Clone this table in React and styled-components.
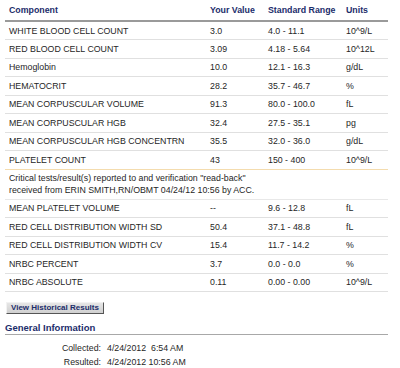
import React from 'react'
import styled, { createGlobalStyle } from 'styled-components'

const GlobalStyle = createGlobalStyle`
  body {
    margin: 0;
    background: #ffffff;
    font-family: "Liberation Sans", Arial, sans-serif;
  }
`;

const Page = styled.div`
  width: 400px;
  padding: 0 12px 0 5px;
  box-sizing: border-box;
`;

const ResultTable = styled.table`
  width: 383px;
  border-collapse: collapse;
  table-layout: fixed;
  font-size: 8.8px;
  color: #262626;
`;

const HeadCell = styled.th`
  box-sizing: border-box;
  text-align: left;
  font-weight: bold;
  color: #1c2d6b;
  height: 21px;
  padding: 0 0 0 4px;
  border-bottom: 2px solid #9a9a9a;
  width: ${(p) => p.$w || 'auto'};
`;

const Row = styled.tr`
  height: 18.5px;
  border-bottom: 1px solid ${(p) => (p.$alert ? '#f4dcae' : '#e0e0e0')};
`;

const Cell = styled.td`
  padding: 0 0 0 4px;
  white-space: nowrap;
`;

const NoteRow = styled.tr`
  border-bottom: 1px solid #e8e8e8;
`;

const NoteCell = styled.td`
  padding: 2px 0 3px 4px;
  line-height: 12px;
`;

const Actions = styled.div`
  display: flex;
  padding: 10px 0 0 1px;
`;

const HistoryButton = styled.button`
  font-family: "Liberation Sans", Arial, sans-serif;
  font-size: 8px;
  font-weight: bold;
  color: #1c2d6b;
  background: linear-gradient(#e6e6e6, #d0d0d0);
  border: 1px solid;
  border-color: #f2f2f2 #555 #555 #f2f2f2;
  padding: 0 4px;
  height: 12px;
  line-height: 10px;
`;

const SectionTitle = styled.div`
  margin-top: 8px;
  font-size: 9.5px;
  line-height: 11px;
  font-weight: bold;
  color: #1c2d6b;
  padding-bottom: 1px;
  border-bottom: 1px solid #a8a8a8;
  width: 383px;
`;

const InfoGrid = styled.div`
  display: grid;
  grid-template-columns: 96px auto;
  column-gap: 6px;
  row-gap: 3px;
  margin-top: 8px;
  font-size: 8.8px;
  line-height: 11px;
  color: #262626;
`;

const InfoLabel = styled.span`
  text-align: right;
`;

const InfoValue = styled.span`
  white-space: pre;
`;

const results = [
  ['WHITE BLOOD CELL COUNT', '3.0', '4.0 - 11.1', '10^9/L'],
  ['RED BLOOD CELL COUNT', '3.09', '4.18 - 5.64', '10^12L'],
  ['Hemoglobin', '10.0', '12.1 - 16.3', 'g/dL'],
  ['HEMATOCRIT', '28.2', '35.7 - 46.7', '%'],
  ['MEAN CORPUSCULAR VOLUME', '91.3', '80.0 - 100.0', 'fL'],
  ['MEAN CORPUSCULAR HGB', '32.4', '27.5 - 35.1', 'pg'],
  ['MEAN CORPUSCULAR HGB CONCENTRN', '35.5', '32.0 - 36.0', 'g/dL'],
  ['PLATELET COUNT', '43', '150 - 400', '10^9/L', true],
]

const moreResults = [
  ['MEAN PLATELET VOLUME', '--', '9.6 - 12.8', 'fL'],
  ['RED CELL DISTRIBUTION WIDTH SD', '50.4', '37.1 - 48.8', 'fL'],
  ['RED CELL DISTRIBUTION WIDTH CV', '15.4', '11.7 - 14.2', '%'],
  ['NRBC PERCENT', '3.7', '0.0 - 0.0', '%'],
  ['NRBC ABSOLUTE', '0.11', '0.00 - 0.00', '10^9/L'],
]

const ResultRow = ({ r }) => (
  <Row $alert={r[4]}>
    <Cell>{r[0]}</Cell>
    <Cell>{r[1]}</Cell>
    <Cell>{r[2]}</Cell>
    <Cell>{r[3]}</Cell>
  </Row>
)

const App = () => {
  return (
    <Page>
      <GlobalStyle />
      <ResultTable>
        <thead>
          <tr>
            <HeadCell $w="201px">Component</HeadCell>
            <HeadCell $w="58px">Your Value</HeadCell>
            <HeadCell $w="78px">Standard Range</HeadCell>
            <HeadCell>Units</HeadCell>
          </tr>
        </thead>
        <tbody>
          {results.map((r) => <ResultRow key={r[0]} r={r} />)}
          <NoteRow>
            <NoteCell colSpan={4}>
              Critical tests/result(s) reported to and verification "read-back"
              <br />
              received from ERIN SMITH,RN/OBMT 04/24/12 10:56 by ACC.
            </NoteCell>
          </NoteRow>
          {moreResults.map((r) => <ResultRow key={r[0]} r={r} />)}
        </tbody>
      </ResultTable>
      <Actions>
        <HistoryButton>View Historical Results</HistoryButton>
      </Actions>
      <SectionTitle>General Information</SectionTitle>
      <InfoGrid>
        <InfoLabel>Collected:</InfoLabel>
        <InfoValue>4/24/2012  6:54 AM</InfoValue>
        <InfoLabel>Resulted:</InfoLabel>
        <InfoValue>4/24/2012 10:56 AM</InfoValue>
      </InfoGrid>
    </Page>
  )
}

export default App
